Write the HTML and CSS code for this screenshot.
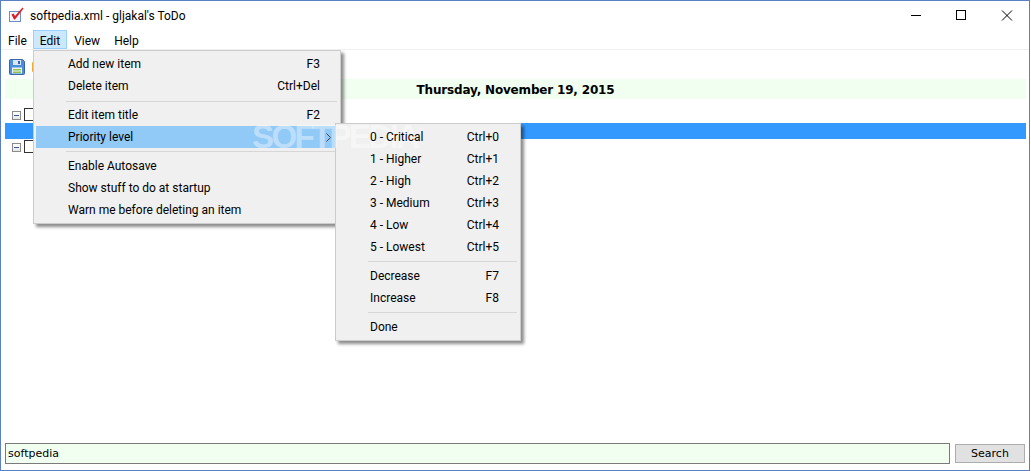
FILE: index.html
```html
<!DOCTYPE html>
<html lang="en">
<head>
<meta charset="utf-8">
<title>softpedia.xml - gljakal's ToDo</title>
<link rel="stylesheet" href="styles.css">
</head>
<body>
<div class="window">
  <header class="titlebar">
    <svg class="appicon" width="16" height="16" viewBox="0 0 16 16"><rect x="1.500" y="4.500" width="11" height="10" fill="#f4f7fc" stroke="#6f8cc4"/><path d="M3.500 7.500 L5.500 6.500 L7 9 L14.500 .5 L15.500 1.500 L7 12.500 L6 12.500 Z" fill="#e01a22"/></svg>
    <span class="title">softpedia.xml - gljakal's ToDo</span>
    <div class="winctl">
      <svg class="min" width="45" height="16" viewBox="0 0 45 16"><path d="M18 10.500H28" stroke="#000" fill="none"/></svg>
      <svg width="46" height="16" viewBox="0 0 46 16"><rect x="18.500" y="5.500" width="9" height="9" stroke="#000" fill="none"/></svg>
      <svg width="46" height="16" viewBox="0 0 46 16"><path d="M18 5.500 L28 15.500 M28 5.500 L18 15.500" stroke="#000" fill="none"/></svg>
    </div>
  </header>
  <nav class="menubar">
    <span class="mi">File</span><span class="mi open">Edit</span><span class="mi">View</span><span class="mi">Help</span>
  </nav>
  <div class="toolbar">
    <svg width="16" height="16" viewBox="0 0 16 16"><path d="M.5 1.500 Q.5 .5 1.500 .5 H13.500 L15.500 2.500 V14.500 Q15.500 15.500 14.500 15.500 H1.500 Q.5 15.500 .5 14.500 Z" fill="#4d8fdc" stroke="#3a64a8"/><rect x="4" y="1" width="8" height="5" fill="#d9e6f5"/><rect x="9" y="2" width="2" height="3" fill="#3a64a8"/><rect x="3" y="8.500" width="10" height="6" fill="#eef3f0"/><rect x="4" y="10" width="8" height="1.500" fill="#8cc152"/><rect x="4" y="12.500" width="8" height="1.500" fill="#8cc152"/></svg>
    <svg width="16" height="16" viewBox="0 0 16 16"><rect x="0" y="3" width="14" height="10" rx="1" fill="#f2a93b"/></svg>
  </div>
  <div class="datebar">Thursday, November 19, 2015</div>
  <div class="tree">
    <div class="row"><span class="exp"></span><span class="chk"></span></div>
    <div class="row sel"></div>
    <div class="row"><span class="exp"></span><span class="chk"></span></div>
  </div>
  <div class="searchbar">
    <input class="query" type="text" value="softpedia">
    <button class="search" type="button">Search</button>
  </div>

  <div class="menu edit">
    <div class="item"><span>Add new item</span><span>F3</span></div>
    <div class="item"><span>Delete item</span><span>Ctrl+Del</span></div>
    <div class="sep low"></div>
    <div class="item"><span>Edit item title</span><span>F2</span></div>
    <div class="item hl"><span>Priority level</span><svg class="arrow" width="5" height="9" viewBox="0 0 5 9"><path d="M.5 .5 L4.500 4.500 L.5 8.500" fill="none" stroke="#444"/></svg></div>
    <div class="sep"></div>
    <div class="item"><span>Enable Autosave</span></div>
    <div class="item"><span>Show stuff to do at startup</span></div>
    <div class="item"><span>Warn me before deleting an item</span></div>
  </div>
  <div class="menu sub">
    <div class="item"><span>0 - Critical</span><span>Ctrl+0</span></div>
    <div class="item"><span>1 - Higher</span><span>Ctrl+1</span></div>
    <div class="item"><span>2 - High</span><span>Ctrl+2</span></div>
    <div class="item"><span>3 - Medium</span><span>Ctrl+3</span></div>
    <div class="item"><span>4 - Low</span><span>Ctrl+4</span></div>
    <div class="item"><span>5 - Lowest</span><span>Ctrl+5</span></div>
    <div class="sep"></div>
    <div class="item"><span>Decrease</span><span>F7</span></div>
    <div class="item"><span>Increase</span><span>F8</span></div>
    <div class="sep"></div>
    <div class="item"><span>Done</span></div>
  </div>
  <div class="watermark">SOFTPEDIA<sup class="reg">®</sup></div>
</div>
</body>
</html>
```
FILE: styles.css
```css
* { box-sizing: border-box; }
html, body { margin: 0; padding: 0; background: #fff; }
body { width: 1031px; height: 471px; overflow: hidden; font-family: Roboto, sans-serif; font-size: 12px; color: #000; }
.window { position: relative; width: 1030px; height: 471px; border: 1px solid #5a7fc4; background: #fff; display: flex; flex-direction: column; }
.titlebar { height: 29px; flex: none; display: flex; align-items: center; padding-left: 7px; }
.appicon { flex: none; margin-top: -1px; }
.title { margin-left: 6px; flex: 1; }
.winctl { display: flex; flex: none; margin-top: -1px; margin-right: -1px; }
.winctl svg { display: block; margin-bottom: 4px; }
.menubar { height: 20px; flex: none; display: flex; border-bottom: 1px solid #f0f0f0; }
.mi { padding: 0 6px; line-height: 23px; height: 19px; border: 1px solid transparent; border-width: 0 1px; }
.mi:first-child { margin-right: -1px; }
.mi.open { background: #cce8ff; border: 1px solid #99d1ff; line-height: 21px; }
.toolbar { height: 29px; flex: none; display: flex; gap: 7px; padding: 9px 0 0 8px; }
.datebar { height: 20px; flex: none; margin: 0 3px 0 4px; background: #f0fff0; text-align: center; font: bold 12px/23px "DejaVu Sans", sans-serif; letter-spacing: -.18px; }
.tree { flex: 1; padding-top: 8px; margin: 0 3px 0 4px; }
.row { height: 15px; display: flex; align-items: center; padding-left: 7px; gap: 3px; }
.row.sel { background: #3399ff; height: 16px; margin-top: 1px; }
.exp { width: 9px; height: 9px; margin-top: 2px; border: 1px solid #8b8b8b; background: linear-gradient(#fff, #e6e6e6); position: relative; }
.exp::after { content: ""; position: absolute; left: 1px; top: 3px; width: 5px; height: 1px; background: #3a5a9c; }
.chk { width: 13px; height: 13px; border: 1px solid #333; background: #fff; }
.searchbar { height: 27px; flex: none; display: flex; gap: 5px; padding: 0 4px; align-items: flex-start; }
.query { flex: none; width: 945px; height: 21px; border: 1px solid #7a7a7a; background: #f0fff0; padding: 0 2px; font: 11px "DejaVu Sans", sans-serif; color: #000; outline: none; }
.search { flex: none; width: 70px; height: 19px; margin-top: 1px; border: 1px solid #adadad; background: #e1e1e1; padding: 0; font: 11px "DejaVu Sans", sans-serif; color: #000; }
.menu { position: absolute; background: #f0f0f0; border: 1px solid #ccc; box-shadow: 3px 3px 3px rgba(0,0,0,.45); padding: 2px; }
.edit { left: 32px; top: 49px; width: 308px; height: 174px; }
.sub { left: 334px; top: 122px; width: 186px; height: 218px; }
.item { position: relative; height: 22px; display: flex; justify-content: space-between; align-items: center; padding: 0 18px 0 32px; line-height: 21px; white-space: nowrap; color: #000; }
.sub .item { padding-right: 19px; }
.item.hl { padding-right: 7px; background: #91c9f7; }
.item > * { position: relative; z-index: 2; }
.arrow { flex: none; }
.sep { height: 7px; position: relative; }
.sep::after { content: ""; position: absolute; left: 30px; right: 1px; top: 3px; height: 1px; background: #d7d7d7; }
.sep.low::after { top: 4px; }
.watermark { position: absolute; z-index: 1; left: 251px; top: 119px; font: bold 33px/34px "Liberation Sans", sans-serif; letter-spacing: -2.6px; color: rgba(255,255,255,.42); pointer-events: none; white-space: nowrap; }
.reg { font-size: 9px; letter-spacing: 0; line-height: 0; vertical-align: 14px; }
```
